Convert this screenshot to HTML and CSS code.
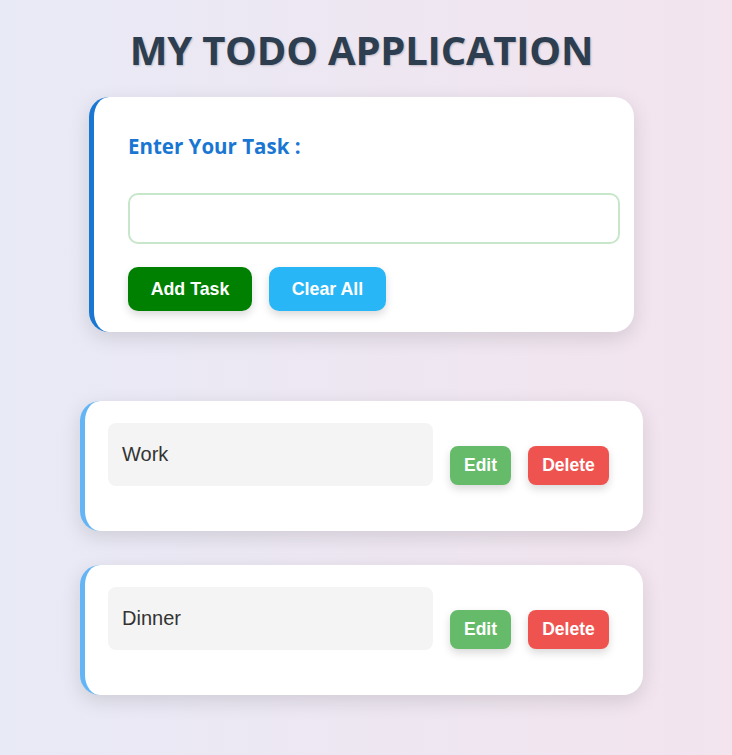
FILE: index.html
```html
<!DOCTYPE html>
<html>
<head>
<meta charset="utf-8">
<link rel="stylesheet" href="styles.css">
</head>
<body>
<div class="page">
  <h1 class="title">MY TODO APPLICATION</h1>
  <div class="form-card">
    <h2 class="form-label">Enter Your Task :</h2>
    <input class="task-input" type="text">
    <div class="form-actions">
      <button class="btn btn-add">Add Task</button>
      <button class="btn btn-clear">Clear All</button>
    </div>
  </div>
  <div class="tasks">
    <div class="task-card">
      <div class="task-row">
        <div class="task-text">Work</div>
        <button class="btn-small btn-edit">Edit</button>
        <button class="btn-small btn-delete">Delete</button>
      </div>
    </div>
    <div class="task-card">
      <div class="task-row">
        <div class="task-text">Dinner</div>
        <button class="btn-small btn-edit">Edit</button>
        <button class="btn-small btn-delete">Delete</button>
      </div>
    </div>
  </div>
</div>
</body>
</html>
```
FILE: styles.css
```css
html, body {
  margin: 0;
  padding: 0;
}
body {
  min-height: 755px;
  background: linear-gradient(to right, #e8eaf6, #f3e4ee);
  font-family: "Liberation Sans", Arial, sans-serif;
}
.page {
  width: 563px;
  margin-left: 80px;
  padding-top: 26px;
  display: flex;
  flex-direction: column;
  align-items: center;
}
.title {
  margin: 0;
  font-family: "Open Sans", "Noto Sans", sans-serif;
  font-weight: 700;
  font-size: 40px;
  line-height: 48px;
  color: #2c3e50;
  letter-spacing: -0.2px;
  text-shadow: 1px 1px 2px rgba(0,0,0,0.2);
}
.form-card {
  margin-top: 23px;
  width: 545px;
  box-sizing: border-box;
  background: #fff;
  border-left: 5px solid #1976d2;
  border-radius: 20px;
  padding: 35px 14px 21px 34px;
  box-shadow: 0 6px 20px rgba(0,0,0,0.12);
}
.form-label {
  margin: 0;
  font-family: "Open Sans", "Noto Sans", sans-serif;
  font-weight: 700;
  font-size: 20.5px;
  line-height: 28px;
  color: #1976d2;
}
.task-input {
  display: block;
  margin-top: 33px;
  width: 492px;
  height: 51px;
  box-sizing: border-box;
  border: 2px solid #c8e6c9;
  border-radius: 10px;
  outline: none;
  font-size: 18px;
  padding: 0 12px;
}
.form-actions {
  margin-top: 23px;
  display: flex;
  gap: 17px;
}
.btn {
  height: 44px;
  border: none;
  border-radius: 10px;
  color: #fff;
  font-family: "Liberation Sans", Arial, sans-serif;
  font-weight: 700;
  font-size: 17.8px;
  padding: 0;
  box-shadow: 0 4px 8px rgba(0,0,0,0.15);
}
.btn-add {
  width: 124px;
  background: #008000;
}
.btn-clear {
  width: 117px;
  background: #29b6f6;
}
.tasks {
  margin-top: 69px;
  width: 563px;
  display: flex;
  flex-direction: column;
  gap: 34px;
}
.task-card {
  background: #fff;
  border-left: 5px solid #64b5f6;
  border-radius: 20px;
  padding: 22px 34px 23px 23px;
  box-shadow: 0 6px 20px rgba(0,0,0,0.12);
}
.task-row {
  display: flex;
  align-items: center;
  gap: 17px;
}
.task-text {
  width: 325px;
  height: 63px;
  box-sizing: border-box;
  margin-bottom: 22px;
  background: #f4f4f4;
  border-radius: 8px;
  padding: 0 14px;
  display: flex;
  align-items: center;
  font-size: 20px;
  color: #333;
}
.btn-small {
  height: 39px;
  border: none;
  border-radius: 8px;
  color: #fff;
  font-family: "Liberation Sans", Arial, sans-serif;
  font-weight: 700;
  font-size: 17.5px;
  padding: 0;
  box-shadow: 0 4px 8px rgba(0,0,0,0.15);
}
.btn-edit {
  width: 61px;
  background: #66bb6a;
}
.btn-delete {
  width: 81px;
  background: #ef5350;
}
```
